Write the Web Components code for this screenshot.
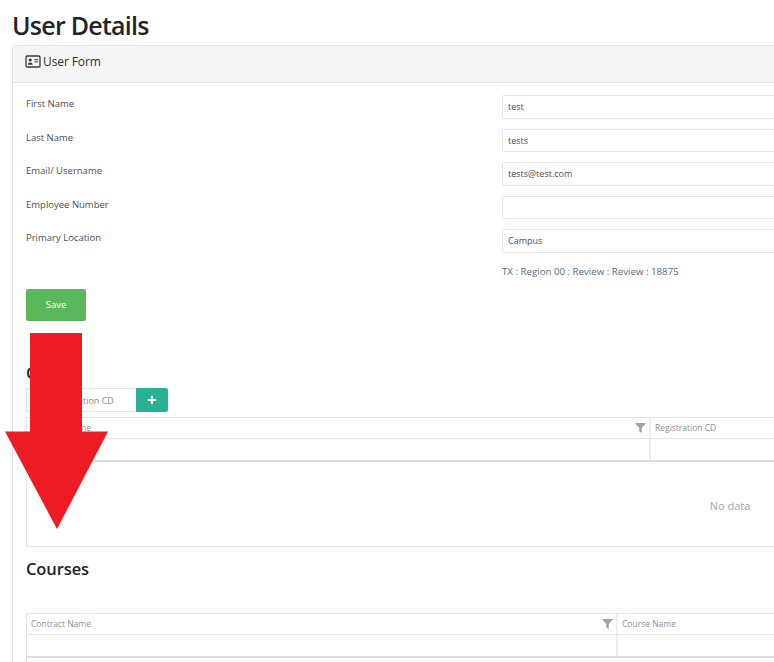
<!DOCTYPE html>
<html>
<head>
<meta charset="utf-8">
<title>User Details</title>
<style>
  html, body { margin: 0; height: 100%; overflow: hidden; background: #fff; }
  body { font-family: "Open Sans", "Noto Sans", sans-serif; color: #212529; }
</style>
</head>
<body>
<user-page>
  <span slot="title">User Details</span>
  <form-card>
    <span slot="header">User Form</span>
    <form-row value="test">First Name</form-row>
    <form-row value="tests">Last Name</form-row>
    <form-row value="tests@test.com">Email/ Username</form-row>
    <form-row value="">Employee Number</form-row>
    <form-row value="Campus">Primary Location</form-row>
    <form-note>TX : Region 00 : Review : Review : 18875</form-note>
    <save-button>Save</save-button>
    <grid-section first="623" second="Registration CD" adder="Registration CD" empty>C</grid-section>
    <grid-section first="590" second="Course Name">Courses</grid-section>
  </form-card>
</user-page>
<red-arrow></red-arrow>

<script>
const FILTER_ICON = `<svg width="11" height="10" viewBox="0 0 11 10"><path d="M0 0h11L6.800 5v5L4.200 8.400V5z" fill="#a3a3a3"/></svg>`;

class UserPage extends HTMLElement {
  constructor() {
    super();
    this.attachShadow({ mode: "open" }).innerHTML = `
      <style>
        :host { display: block; width: 1600px; padding: 0 0 0 12px; }
        h1 { margin: 0; height: 45px; font-size: 25px; line-height: 51px; font-weight: 600; letter-spacing: -0.75px; color: #212529; }
      </style>
      <h1><slot name="title"></slot></h1>
      <slot></slot>`;
  }
}

class FormCard extends HTMLElement {
  constructor() {
    super();
    this.attachShadow({ mode: "open" }).innerHTML = `
      <style>
        :host { display: block; border: 1px solid #e3e3e3; border-radius: 3px 0 0 0; }
        header {
          display: flex; align-items: center; gap: 2px; box-sizing: border-box; height: 37px; padding: 0 12px 5px;
          background: #f5f5f5; border-bottom: 1px solid #e3e3e3;
          font-size: 12px; font-weight: 500; letter-spacing: -0.1px; color: #2b3035;
        }
        svg { display: block; }
        .body { padding: 12px 13px 0; }
      </style>
      <header>
        <svg width="16" height="13" viewBox="0 0 16 13" fill="none">
          <rect x="1" y="1" width="14" height="11" rx="1.2" stroke="#343a40" stroke-width="1.300"/>
          <circle cx="5.200" cy="5" r="1.600" fill="#343a40"/>
          <path d="M2.800 9.800c0-3 4.800-3 4.800 0z" fill="#343a40"/>
          <path d="M9.400 4.600h3.800M9.400 6.800h3.800" stroke="#343a40"/>
        </svg>
        <slot name="header"></slot>
      </header>
      <div class="body"><slot></slot></div>`;
  }
}

class FormRow extends HTMLElement {
  constructor() {
    super();
    this.attachShadow({ mode: "open" }).innerHTML = `
      <style>
        :host { display: grid; grid-template-columns: 476px 900px; height: 33.5px; font-size: 9.5px; color: #495057; }
        label { padding-top: 2px; line-height: 14px; }
        .input {
          box-sizing: border-box; height: 23.5px; padding: 0 5px; line-height: 21px;
          border: 1px solid #e5e5e5; border-radius: 2px; color: #495057; font-size: 9px;
        }
      </style>
      <label><slot></slot></label>
      <div class="input">${this.getAttribute("value")}</div>`;
  }
}

class FormNote extends HTMLElement {
  constructor() {
    super();
    this.attachShadow({ mode: "open" }).innerHTML = `
      <style>
        :host { display: block; margin-left: 476px; height: 24px; padding-top: 1px; font-size: 9.700px; line-height: 16px; color: #5a6b7b; }
      </style>
      <slot></slot>`;
  }
}

class SaveButton extends HTMLElement {
  constructor() {
    super();
    this.attachShadow({ mode: "open" }).innerHTML = `
      <style>
        :host {
          display: flex; align-items: center; justify-content: center; width: 60px; height: 32px; margin-top: 1px;
          background: #5cb85c; border-radius: 2px; color: #fff; font-size: 9.500px;
        }
      </style>
      <slot></slot>`;
  }
}

class GridSection extends HTMLElement {
  constructor() {
    super();
    const first = this.getAttribute("first");
    const second = this.getAttribute("second");
    const adder = this.getAttribute("adder");
    const empty = this.hasAttribute("empty");
    this.attachShadow({ mode: "open" }).innerHTML = `
      <style>
        :host { display: block; }
        h3 { margin: 0; height: 67px; padding-top: 41px; box-sizing: border-box; font-size: 16.500px; line-height: 22px; font-weight: 600; letter-spacing: -0.1px; color: #212529; }
        :host(:not([empty])) h3 { height: 66px; padding-top: 11px; }
        .adder { display: flex; height: 24px; margin-bottom: 5px; }
        .adder div { box-sizing: border-box; width: 110px; padding: 0 5px 0 22px; line-height: 23px; border: 1px solid #e5e5e5; border-right: 0; border-radius: 2px 0 0 2px; font-size: 9px; color: #8a8f94; white-space: nowrap; }
        .adder button { width: 32px; padding: 0; border: 0; border-radius: 0 2px 2px 0; background: #26b293; display: flex; align-items: center; justify-content: center; }
        .grid { width: 1408px; border: 1px solid #e3e3e3; box-sizing: border-box; }
        .row { display: grid; grid-template-columns: ${first - 1}px 1fr; }
        .row > div { border-left: 2px solid #eee; box-sizing: border-box; }
        .row > div:first-child { border-left: 0; }
        .head { height: 20px; border-bottom: 1px solid #e6e6e6; font-size: 8.500px; line-height: 20px; color: #8d9296; }
        .head div { display: flex; justify-content: space-between; align-items: center; padding: 0 3px 0 4px; }
        .filter { height: 23px; border-bottom: 2px solid #dedede; box-sizing: border-box; }
        .none { box-sizing: border-box; height: 84px; padding-top: 4px; display: flex; align-items: center; justify-content: center; font-size: 11px; color: #a0a4a8; }
      </style>
      <h3><slot></slot></h3>
      ${adder ? `<div class="adder"><div>${adder}</div><button aria-label="Add"><svg width="10" height="10" viewBox="0 0 10 10"><path d="M5 .8v8.400M.8 5h8.400" stroke="#fff" stroke-width="2.200"/></svg></button></div>` : ""}
      <div class="grid">
        <div class="row head"><div>Contract Name ${FILTER_ICON}</div><div>${second}</div></div>
        <div class="row filter"><div></div><div></div></div>
        <div class="none">${empty ? "No data" : ""}</div>
      </div>`;
  }
}

class RedArrow extends HTMLElement {
  constructor() {
    super();
    this.attachShadow({ mode: "open" }).innerHTML = `
      <style>
        :host { position: absolute; left: 0; top: 0; display: block; }
        svg { display: block; }
      </style>
      <svg width="120" height="540" viewBox="0 0 120 540">
        <path d="M30 333h52v98.500h26L57 529 5 431.500h25z" fill="#ed1c24"/>
      </svg>`;
  }
}

customElements.define("user-page", UserPage);
customElements.define("form-card", FormCard);
customElements.define("form-row", FormRow);
customElements.define("form-note", FormNote);
customElements.define("save-button", SaveButton);
customElements.define("grid-section", GridSection);
customElements.define("red-arrow", RedArrow);
</script>
</body>
</html>
